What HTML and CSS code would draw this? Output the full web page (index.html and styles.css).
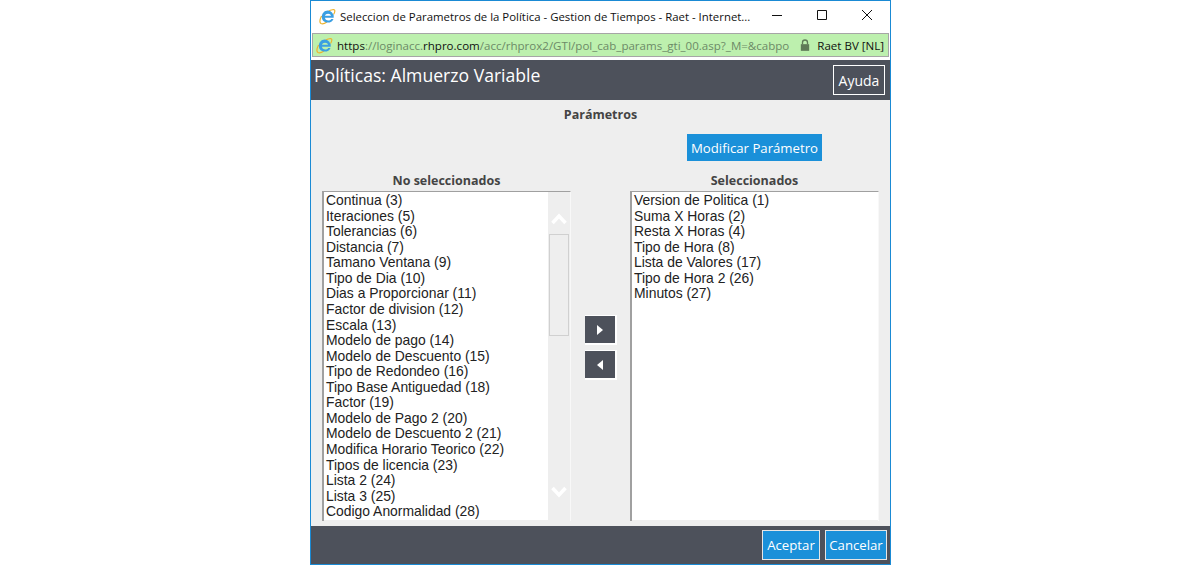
FILE: index.html
```html
<!DOCTYPE html>
<html lang="es">
<head>
  <meta charset="UTF-8" />
  <title>Seleccion de Parametros de la Política</title>
  <link rel="stylesheet" href="styles.css">
</head>
<body>

<div class="window">

  <div class="titlebar">
    <svg class="ie-icon" viewBox="0 0 17 17">
      <path d="M3 9C6 5 11 2 14.5 1.5 16.5 1.5 16 4.5 14.5 6.5M2.5 8C1 11 .5 14.5 2 15.5c1.5.7 4-.2 6-1.5" fill="none" stroke="#eeb32c" stroke-width="1.2"/>
      <path d="M8.7 2.6a6 6 0 0 1 6 6.2v1H6c.1 3.3 5 3.6 6.2 1.1h2.3C13 16 3 16 2.8 9 2.8 5.5 5.4 2.6 8.7 2.6zM6 7.8h6C11.8 4.9 6.3 4.9 6 7.8z" fill="#3b9fe2" fill-rule="evenodd"/>
    </svg>
    <span class="window-title">Seleccion de Parametros de la Política - Gestion de Tiempos - Raet - Internet...</span>
    <div class="window-controls">
      <svg viewBox="0 0 12 12"><path d="M1 6.5h10" stroke="#111" fill="none"/></svg>
      <svg viewBox="0 0 12 12"><path d="M1.5 1.5h9v9h-9z" stroke="#111" fill="none"/></svg>
      <svg viewBox="0 0 12 12"><path d="M1 1l10 10M11 1L1 11" stroke="#111" fill="none"/></svg>
    </div>
  </div>

  <div class="addressbar">
    <svg class="ie-icon" viewBox="0 0 17 17">
      <path d="M3 9C6 5 11 2 14.5 1.5 16.5 1.5 16 4.5 14.5 6.5M2.5 8C1 11 .5 14.5 2 15.5c1.5.7 4-.2 6-1.5" fill="none" stroke="#eeb32c" stroke-width="1.2"/>
      <path d="M8.7 2.6a6 6 0 0 1 6 6.2v1H6c.1 3.3 5 3.6 6.2 1.1h2.3C13 16 3 16 2.8 9 2.8 5.5 5.4 2.6 8.7 2.6zM6 7.8h6C11.8 4.9 6.3 4.9 6 7.8z" fill="#3b9fe2" fill-rule="evenodd"/>
    </svg>
    <span class="url"><b>https</b>://loginacc.<b>rhpro.com</b>/acc/rhprox2/GTI/pol_cab_params_gti_00.asp?_M=&amp;cabpo</span>
    <svg class="lock" viewBox="0 0 12 14">
      <path d="M3 6V4a3 3 0 0 1 6 0v2" fill="none" stroke="#5f7a57" stroke-width="1.6"/>
      <rect x="1" y="6" width="10" height="8" fill="#5f7a57"/>
    </svg>
    <span class="cert">Raet BV [NL]</span>
  </div>

  <header class="page-header">
    <h1>Políticas: Almuerzo Variable</h1>
    <button class="help-btn">Ayuda</button>
  </header>

  <main class="content">
    <h2 class="params-title">Parámetros</h2>
    <div class="modify-row">
      <button class="blue-btn modify-btn">Modificar Parámetro</button>
    </div>

    <div class="pickers">
      <div class="picker">
        <h3>No seleccionados</h3>
        <div class="listbox">
          <ul>
            <li>Continua (3)</li>
            <li>Iteraciones (5)</li>
            <li>Tolerancias (6)</li>
            <li>Distancia (7)</li>
            <li>Tamano Ventana (9)</li>
            <li>Tipo de Dia (10)</li>
            <li>Dias a Proporcionar (11)</li>
            <li>Factor de division (12)</li>
            <li>Escala (13)</li>
            <li>Modelo de pago (14)</li>
            <li>Modelo de Descuento (15)</li>
            <li>Tipo de Redondeo (16)</li>
            <li>Tipo Base Antiguedad (18)</li>
            <li>Factor (19)</li>
            <li>Modelo de Pago 2 (20)</li>
            <li>Modelo de Descuento 2 (21)</li>
            <li>Modifica Horario Teorico (22)</li>
            <li>Tipos de licencia (23)</li>
            <li>Lista 2 (24)</li>
            <li>Lista 3 (25)</li>
            <li>Codigo Anormalidad (28)</li>
          </ul>
          <div class="scrollbar">
            <svg class="arrow" viewBox="0 0 16 12"><path d="M1.500 10l6.500-7 6.500 7" fill="none" stroke="#fff" stroke-width="3.500"/></svg>
            <div class="thumb"></div>
            <svg class="arrow arrow-down" viewBox="0 0 16 12"><path d="M1.500 2l6.500 7 6.500-7" fill="none" stroke="#fff" stroke-width="3.500"/></svg>
          </div>
        </div>
      </div>

      <div class="move-btns">
        <button class="move-btn"><svg viewBox="0 0 6 10"><path d="M0 0l6 5-6 5z" fill="#fff"/></svg></button>
        <button class="move-btn"><svg viewBox="0 0 6 10"><path d="M6 0L0 5l6 5z" fill="#fff"/></svg></button>
      </div>

      <div class="picker">
        <h3>Seleccionados</h3>
        <div class="listbox">
          <ul>
            <li>Version de Politica (1)</li>
            <li>Suma X Horas (2)</li>
            <li>Resta X Horas (4)</li>
            <li>Tipo de Hora (8)</li>
            <li>Lista de Valores (17)</li>
            <li>Tipo de Hora 2 (26)</li>
            <li>Minutos (27)</li>
          </ul>
        </div>
      </div>
    </div>
  </main>

  <footer class="page-footer">
    <button class="blue-btn footer-btn">Aceptar</button>
    <button class="blue-btn footer-btn">Cancelar</button>
  </footer>

</div>

</body>
</html>
```

FILE: styles.css
```css
html, body {
  margin: 0;
  padding: 0;
  background-color: #fff;
  height: 565px;
  overflow: hidden;
}
body {
  display: flex;
  justify-content: center;
  font-family: "Open Sans", sans-serif;
}
button {
  font-family: "Open Sans", sans-serif;
  cursor: pointer;
}
.window {
  width: 581px;
  height: 565px;
  box-sizing: border-box;
  border: 1px solid #1a8ad4;
  display: flex;
  flex-direction: column;
  background-color: #fff;
  margin-left: 1px;
}

/* barre de titre */
.titlebar {
  height: 31px;
  display: flex;
  align-items: center;
  padding-left: 8px;
}
.ie-icon {
  width: 17px;
  height: 17px;
  flex: none;
}
.window-title {
  margin-left: 4px;
  font-size: 11.4px;
  color: #111;
  white-space: nowrap;
}
.window-controls {
  margin-left: auto;
  margin-bottom: 3px;
  display: flex;
  gap: 33px;
  padding-right: 17px;
}
.window-controls svg {
  width: 12px;
  height: 12px;
}

.addressbar {
  height: 22px;
  margin: 1px 1px 0;
  border: 1px solid #a6a6a6;
  background-color: #bdf0ae;
  display: flex;
  align-items: center;
  padding-left: 3px;
  font-size: 11.55px;
}
.url {
  margin-left: 4px;
  color: #6c8a67;
  white-space: nowrap;
}
.url b {
  font-weight: 400;
  color: #111;
}
.lock {
  width: 10px;
  height: 12px;
  margin-left: 11px;
  flex: none;
}
.cert {
  margin-left: 7px;
  color: #111;
  white-space: nowrap;
}

.page-header {
  margin-top: 3px;
  height: 40px;
  background-color: #4d515b;
  display: flex;
  justify-content: space-between;
  padding: 5px 5px 0 3px;
  box-sizing: border-box;
  color: #fff;
}
.page-header h1 {
  margin: -1px 0 0;
  font-size: 17.6px;
  font-weight: 400;
  line-height: 22px;
}
.help-btn {
  width: 52px;
  height: 30px;
  background: none;
  border: 1px solid #fff;
  color: #fff;
  font-size: 14px;
  padding: 0;
}

.content {
  flex: 1;
  background-color: #eee;
  padding: 7px 11px 0;
  min-height: 0;
}
.params-title {
  margin: 0;
  text-align: center;
  font-size: 12.5px;
  line-height: 16px;
  color: #444;
}
.modify-row {
  margin-top: 11px;
  padding-left: 365px;
}
.blue-btn {
  background-color: #1a90d9;
  color: #fff;
  font-size: 13.2px;
  padding: 0;
}
.modify-btn {
  width: 135px;
  height: 27px;
  border: none;
  display: block;
}

.pickers {
  display: flex;
  margin-top: 11px;
}
.picker {
  width: 249px;
}
.picker h3 {
  margin: 0 0 2px;
  text-align: center;
  font-size: 12.5px;
  line-height: 17px;
  color: #444;
}
.listbox {
  height: 330px;
  box-sizing: border-box;
  border-left: 2px solid #a0a0a0;
  border-top: 1px solid #a0a0a0;
  border-right: 1px solid #f8f8f8;
  display: flex;
  background-color: #eee;
  overflow: hidden;
}
.listbox ul {
  flex: 1;
  margin: 0;
  padding: 1px 0 0 2px;
  list-style: none;
  background-color: #fff;
  font-family: "Liberation Sans", Arial, sans-serif;
  font-size: 13.9px;
  line-height: 15.56px;
  color: #222;
  height: 327px;
}
.scrollbar {
  width: 22px;
  display: flex;
  flex-direction: column;
  align-items: center;
  position: relative;
  height: 327px;
}
.arrow {
  width: 16px;
  height: 12px;
  margin-top: 21px;
  flex: none;
}
.arrow-down {
  position: absolute;
  left: 3px;
  bottom: 21px;
  margin: 0;
}
.thumb {
  width: 20px;
  height: 102px;
  margin-top: 9px;
  border: 1px solid #d0d0d0;
  box-sizing: border-box;
}

.move-btns {
  width: 59px;
  box-sizing: border-box;
  display: flex;
  flex-direction: column;
  padding: 143px 0 0 14px;
  gap: 5px;
}
.move-btn {
  width: 32px;
  height: 30px;
  box-sizing: border-box;
  background-color: #4d515b;
  border: solid #fff;
  border-width: 1px 2px 2px 0;
  padding: 0;
  display: flex;
  align-items: center;
  justify-content: center;
}
.move-btn svg {
  width: 6px;
  height: 10px;
}

.page-footer {
  height: 38px;
  flex: none;
  background-color: #4d515b;
  display: flex;
  justify-content: flex-end;
  align-items: flex-start;
  gap: 5px;
  padding: 4px 3px 0 0;
  box-sizing: border-box;
}
.footer-btn {
  width: 58px;
  height: 30px;
  border: 1px solid #e6e6e6;
}
.footer-btn:last-child {
  width: 62px;
}
```
